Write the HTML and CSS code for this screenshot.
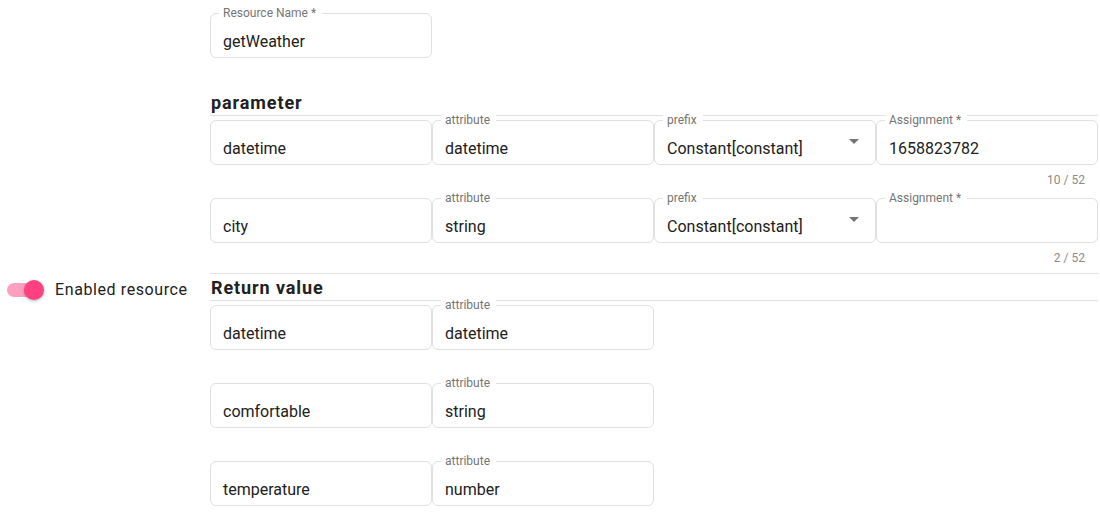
FILE: index.html
```html
<!DOCTYPE html>
<html lang="en">

<head>
    <meta charset="UTF-8">
    <meta name="viewport" content="width=device-width, initial-scale=1.0">
    <title>Resource</title>
    <link rel="stylesheet" href="styles.css">
</head>

<body>
<div class="page">
    <div class="side">
        <label class="switch-line">
            <span class="switch"><span class="thumb"></span></span>
            Enabled resource
        </label>
    </div>

    <div class="form">
        <div class="field">
            <span class="label">Resource Name *</span>
            <div class="value">getWeather</div>
        </div>

        <section class="group group-param">
            <h3 class="group-title">parameter</h3>

            <div class="row">
                <div class="field"><div class="value">datetime</div></div>
                <div class="field"><span class="label">attribute</span><div class="value">datetime</div></div>
                <div class="field select">
                    <span class="label">prefix</span>
                    <div class="value">Constant[constant]
                        <svg class="arrow" viewBox="0 0 24 24" width="24" height="24"><path d="M7 10l5 5 5-5z"/></svg>
                    </div>
                </div>
                <div class="cell">
                    <div class="field"><span class="label">Assignment *</span><div class="value">1658823782</div></div>
                    <div class="helper">10 / 52</div>
                </div>
            </div>

            <div class="row">
                <div class="field"><div class="value">city</div></div>
                <div class="field"><span class="label">attribute</span><div class="value">string</div></div>
                <div class="field select">
                    <span class="label">prefix</span>
                    <div class="value">Constant[constant]
                        <svg class="arrow" viewBox="0 0 24 24" width="24" height="24"><path d="M7 10l5 5 5-5z"/></svg>
                    </div>
                </div>
                <div class="cell">
                    <div class="field"><span class="label">Assignment *</span><div class="value"></div></div>
                    <div class="helper">2 / 52</div>
                </div>
            </div>
        </section>

        <section class="group">
            <h3 class="group-title">Return value</h3>

            <div class="row">
                <div class="field"><div class="value">datetime</div></div>
                <div class="field"><span class="label">attribute</span><div class="value">datetime</div></div>
            </div>
            <div class="row">
                <div class="field"><div class="value">comfortable</div></div>
                <div class="field"><span class="label">attribute</span><div class="value">string</div></div>
            </div>
            <div class="row">
                <div class="field"><div class="value">temperature</div></div>
                <div class="field"><span class="label">attribute</span><div class="value">number</div></div>
            </div>
        </section>
    </div>
</div>
</body>

</html>
```

FILE: styles.css
```css
body {
    margin: 0;
    background: #fff;
    font-family: Roboto, "Liberation Sans", Arial, sans-serif;
    color: #212121;
}
.page {
    display: flex;
}
.side {
    flex: none;
    width: 210px;
    padding-top: 278px;
}
.switch-line {
    display: flex;
    align-items: center;
    height: 24px;
    font-size: 16px;
    line-height: 24px;
    letter-spacing: 0.6px;
    white-space: nowrap;
}
.switch {
    display: block;
    width: 34px;
    height: 14px;
    margin: 0 14px 0 7px;
    border-radius: 7px;
    background: #ff9fc0;
}
.thumb {
    display: block;
    width: 20px;
    height: 20px;
    margin: -3px 0 0 17px;
    border-radius: 50%;
    background: #ff4081;
    box-shadow: 0 1px 3px rgba(0, 0, 0, 0.3);
}
.form {
    width: 888px;
    padding-top: 13px;
}
.field {
    box-sizing: border-box;
    width: 222px;
    height: 45px;
    padding: 0 12px;
    border: 1px solid #e0e0e0;
    border-radius: 6px;
}
.label {
    display: block;
    width: max-content;
    margin: -7px 0 -5px -4px;
    padding: 0 6px 0 4px;
    background: #fff;
    color: #757575;
    font-size: 12px;
    line-height: 12px;
}
.value {
    padding-top: 18px;
    font-size: 16px;
    line-height: 19px;
    white-space: nowrap;
}
.select .value {
    display: flex;
    justify-content: space-between;
}
.arrow {
    flex: none;
    margin: -10px -3px 0 0;
    fill: #757575;
}
.group {
    margin-top: 30px;
}
.group-param {
    border-bottom: 1px solid #e0e0e0;
    margin-top: 31px;
}
.group-param + .group {
    margin-top: 0;
}
.group-title {
    margin: 0 0 4px;
    padding: 3px 1px 0;
    height: 23px;
    font-size: 18px;
    line-height: 22px;
    font-weight: bold;
    letter-spacing: 0.9px;
    border-bottom: 1px solid #e0e0e0;
}
.row {
    display: grid;
    grid-template-columns: repeat(4, 222px);
    align-content: start;
    min-height: 78px;
}
.group-param .row:last-child {
    min-height: 75px;
}
.helper {
    padding: 8px 13px 0 0;
    text-align: right;
    color: #8a8a8a;
    font-size: 12px;
    line-height: 14px;
}
```
